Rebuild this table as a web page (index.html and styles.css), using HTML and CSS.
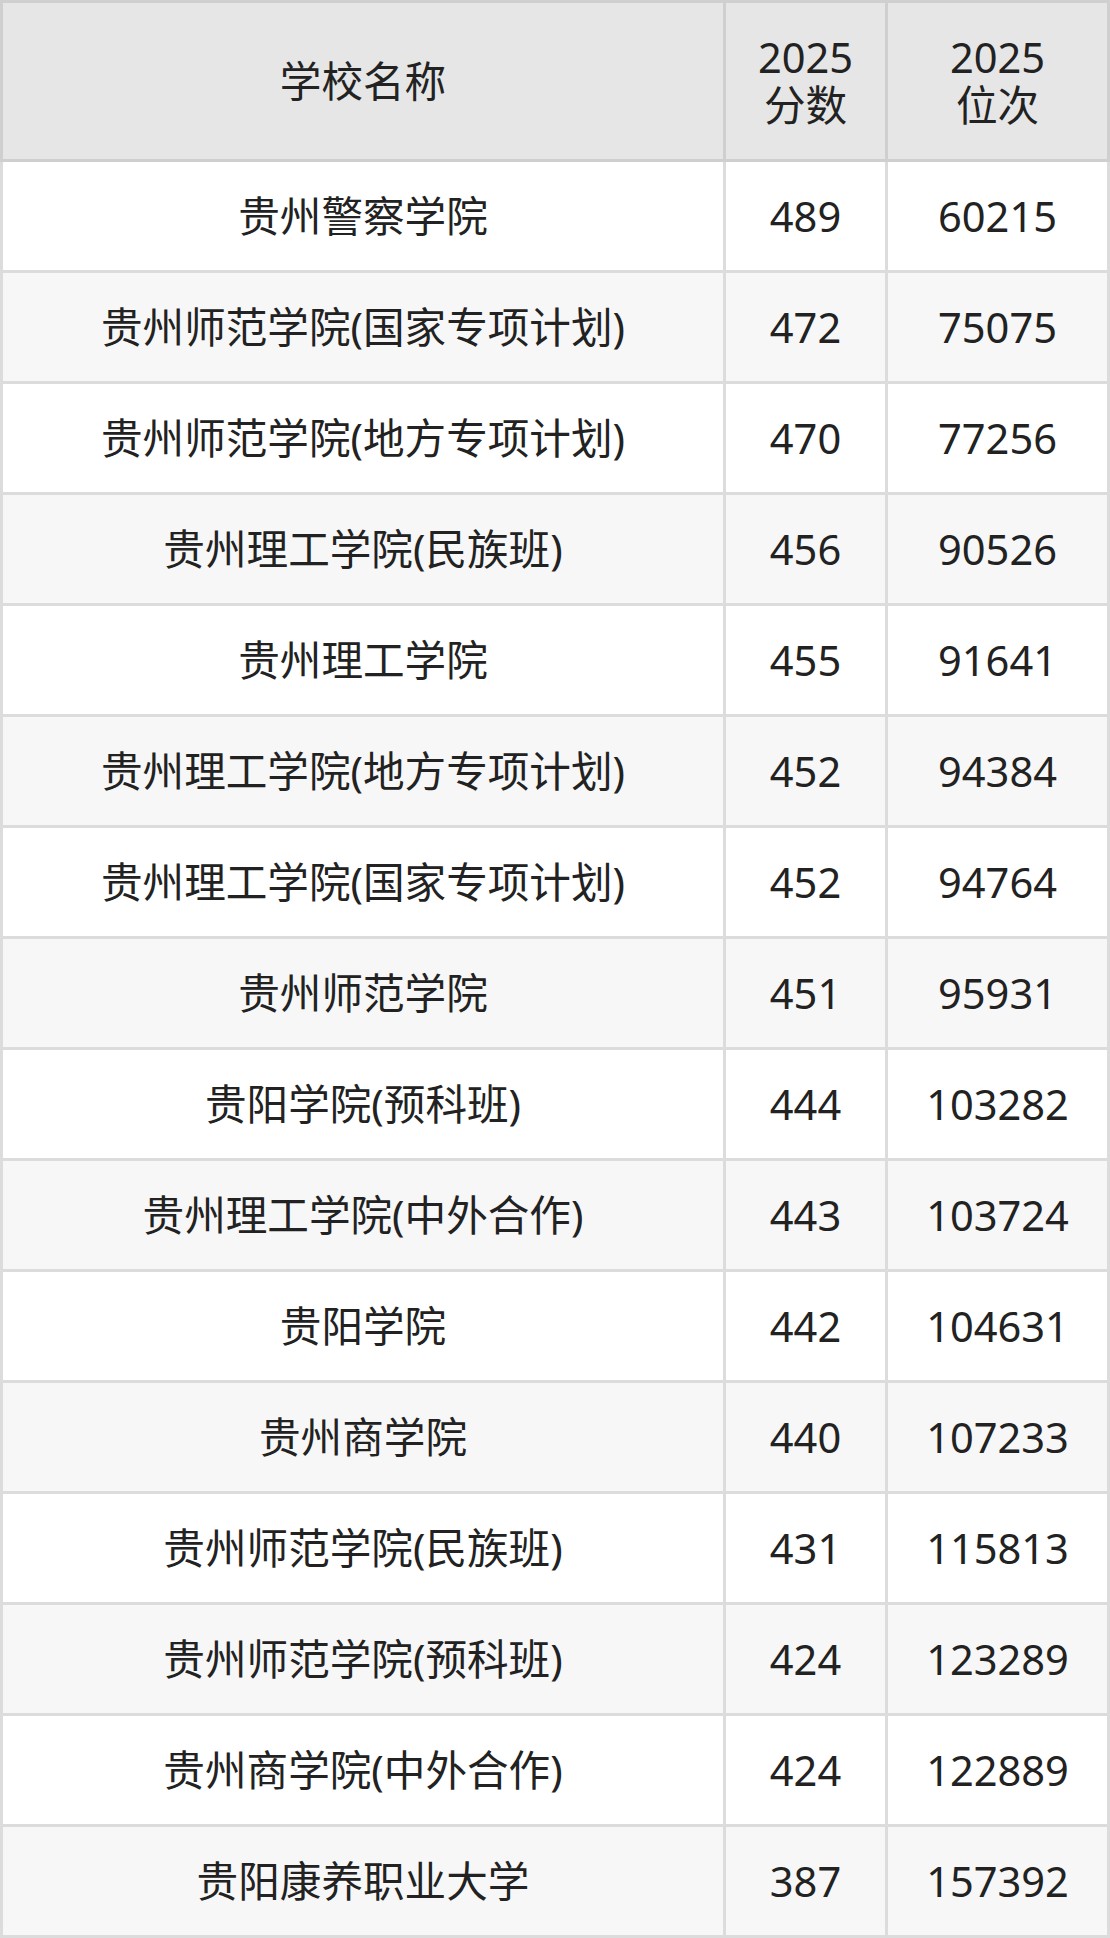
FILE: index.html
```html
<!DOCTYPE html>
<html lang="zh-CN">
<head>
<meta charset="utf-8">
<title>贵州院校 2025 分数位次</title>
<link rel="stylesheet" href="styles.css">
</head>
<body>
<div class="table">
  <div class="head">
    <div class="cell"><span>学校名称</span></div>
    <div class="cell"><span>2025</span><span>分数</span></div>
    <div class="cell"><span>2025</span><span>位次</span></div>
  </div>
  <div class="body">
    <div class="cell">贵州警察学院</div><div class="cell">489</div><div class="cell">60215</div>
    <div class="cell alt">贵州师范学院(国家专项计划)</div><div class="cell alt">472</div><div class="cell alt">75075</div>
    <div class="cell">贵州师范学院(地方专项计划)</div><div class="cell">470</div><div class="cell">77256</div>
    <div class="cell alt">贵州理工学院(民族班)</div><div class="cell alt">456</div><div class="cell alt">90526</div>
    <div class="cell">贵州理工学院</div><div class="cell">455</div><div class="cell">91641</div>
    <div class="cell alt">贵州理工学院(地方专项计划)</div><div class="cell alt">452</div><div class="cell alt">94384</div>
    <div class="cell">贵州理工学院(国家专项计划)</div><div class="cell">452</div><div class="cell">94764</div>
    <div class="cell alt">贵州师范学院</div><div class="cell alt">451</div><div class="cell alt">95931</div>
    <div class="cell">贵阳学院(预科班)</div><div class="cell">444</div><div class="cell">103282</div>
    <div class="cell alt">贵州理工学院(中外合作)</div><div class="cell alt">443</div><div class="cell alt">103724</div>
    <div class="cell">贵阳学院</div><div class="cell">442</div><div class="cell">104631</div>
    <div class="cell alt">贵州商学院</div><div class="cell alt">440</div><div class="cell alt">107233</div>
    <div class="cell">贵州师范学院(民族班)</div><div class="cell">431</div><div class="cell">115813</div>
    <div class="cell alt">贵州师范学院(预科班)</div><div class="cell alt">424</div><div class="cell alt">123289</div>
    <div class="cell">贵州商学院(中外合作)</div><div class="cell">424</div><div class="cell">122889</div>
    <div class="cell alt">贵阳康养职业大学</div><div class="cell alt">387</div><div class="cell alt">157392</div>
  </div>
</div>
</body>
</html>
```
FILE: styles.css
```css
html, body {
  margin: 0;
  padding: 0;
  background: #ffffff;
}

.table {
  width: 1110px;
  font-family: "Noto Sans", "Noto Sans CJK SC", sans-serif;
  font-size: 41.6px;
  line-height: 48px;
  color: #222222;
}

.head,
.body {
  display: grid;
  grid-template-columns: 720px 159px 219px;
  column-gap: 3px;
  row-gap: 3px;
  box-sizing: border-box;
  width: 1110px;
}

.head {
  padding: 3px;
  background: #cfcfcf;
}

.body {
  padding: 0 3px 3px 3px;
  background: #dcdcdc;
}

.cell {
  background: #ffffff;
  padding: 30px 4px;
  text-align: center;
  white-space: nowrap;
}

.head .cell {
  background: #e6e6e6;
  display: flex;
  flex-direction: column;
  align-items: center;
  justify-content: center;
}

.head .cell span {
  display: block;
}

.cell.alt {
  background: #f7f7f7;
}
```
